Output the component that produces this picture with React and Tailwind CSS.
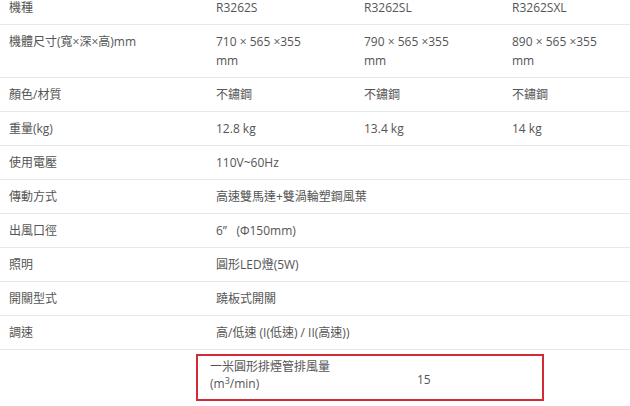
const FONT = { fontFamily: '"Open Sans", "Noto Sans CJK TC", sans-serif' };

const ROWS = [
  { label: "機種", values: ["R3262S", "R3262SL", "R3262SXL"] },
  { label: "機體尺寸(寬×深×高)mm", values: ["710 × 565 ×355 mm", "790 × 565 ×355 mm", "890 × 565 ×355 mm"] },
  { label: "顏色/材質", values: ["不鏽鋼", "不鏽鋼", "不鏽鋼"] },
  { label: "重量(kg)", values: ["12.8 kg", "13.4 kg", "14 kg"] },
  { label: "使用電壓", span: "110V~60Hz" },
  { label: "傳動方式", span: "高速雙馬達+雙渦輪塑鋼風葉" },
  { label: "出風口徑", span: "6”   (Φ150mm)" },
  { label: "照明", span: "圓形LED燈(5W)" },
  { label: "開關型式", span: "蹺板式開關" },
  { label: "調速", span: "高/低速 (I(低速) / II(高速))" },
];

export default function App() {
  return (
    <div className="w-[630px] h-[406px] overflow-hidden bg-white text-[12px] leading-[19px] text-[#555]" style={FONT}>
      <div className="-mt-[9px] w-[642px]">
        {ROWS.map((row) => (
          <div key={row.label} className="flex border-b border-[#e8e8e8]">
            <div className="w-[196px] shrink-0 pl-[9px] py-[7px]">{row.label}</div>
            {row.values ? (
              row.values.map((v, i) => (
                <div key={i} className="w-[148px] shrink-0 px-[20px] py-[7px]">{v}</div>
              ))
            ) : (
              <div className="flex-1 px-[20px] py-[7px] whitespace-pre">{row.span}</div>
            )}
          </div>
        ))}
        <div className="flex">
          <div className="w-[196px] shrink-0" />
          <div className="pt-[4px]">
            <div className="flex w-[348px] h-[47px] border-2 border-[#d42a36]">
              <div className="w-[219px] shrink-0 pl-[12px] pt-[2px] leading-[17px]">
                一米圓形排煙管排風量
                <br />
                (m<sup className="text-[9px] leading-none">3</sup>/min)
              </div>
              <div className="flex items-center pt-[3px]">15</div>
            </div>
          </div>
        </div>
      </div>
    </div>
  );
}
